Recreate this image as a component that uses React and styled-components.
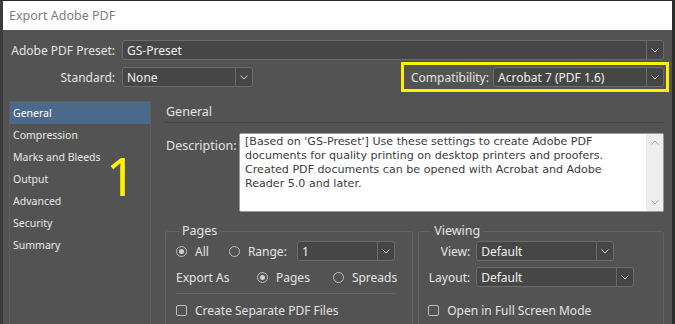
import React from 'react'
import styled, { createGlobalStyle } from 'styled-components'

const GlobalStyle = createGlobalStyle`
  html, body {
    margin: 0;
    padding: 0;
    background: #535353;
  }
  body {
    font-family: "Noto Sans", "Open Sans", sans-serif;
  }
`

const Window = styled.div`
  width: 675px;
  height: 324px;
  box-sizing: border-box;
  overflow: hidden;
  display: flex;
  flex-direction: column;
  border-top: 1px solid #2a2a2a;
  border-left: 3px solid #3b3b3b;
  border-right: 3px solid #2b2b2b;
  background: #535353;
  color: #e4e4e4;
  font-size: 12px;
`

const TitleBar = styled.div`
  flex: none;
  height: 29px;
  display: flex;
  align-items: center;
  padding-left: 6px;
  background: #fff;
  color: #7d7d7d;
  font-size: 12.5px;
`

const Body = styled.div`
  flex: 1;
  min-height: 0;
  display: flex;
  flex-direction: column;
  padding: 10px 8px 0 6px;
`

const Row = styled.div`
  flex: none;
  display: flex;
  align-items: center;
  height: ${p => p.$h || 20}px;
  margin-top: ${p => p.$mt || 0}px;
`

const Label = styled.div`
  flex: none;
  width: ${p => p.$w}px;
  margin-right: ${p => p.$gap ?? 7}px;
  text-align: ${p => (p.$left ? 'left' : 'right')};
  white-space: nowrap;
`

const SelectBox = styled.div`
  box-sizing: border-box;
  display: flex;
  height: 20px;
  width: ${p => (p.$w ? `${p.$w}px` : 'auto')};
  flex: ${p => (p.$w ? 'none' : '1')};
  border: 1px solid #6c6c6c;
  border-radius: 3px;
  background: #464646;
  color: #f0f0f0;
`

const SelectValue = styled.div`
  flex: 1;
  display: flex;
  align-items: center;
  padding-left: 4px;
  white-space: nowrap;
`

const SelectArrow = styled.div`
  flex: none;
  width: 16px;
  display: flex;
  align-items: center;
  justify-content: center;
  border-left: 1px solid #6c6c6c;
`

const Spacer = styled.div`
  flex: 1;
`

const Highlight = styled.div`
  box-sizing: border-box;
  display: flex;
  align-items: center;
  height: 30px;
  margin-right: -5px;
  padding: 0 2px 0 7px;
  border: 3px solid #fff200;
`

const Main = styled.div`
  flex: 1;
  min-height: 0;
  display: flex;
  margin-top: 9px;
`

const Sidebar = styled.div`
  position: relative;
  flex: none;
  width: 142px;
  box-sizing: border-box;
  border: 1px solid #5f5f5f;
  border-bottom: none;
`

const NavItem = styled.div`
  height: 22px;
  display: flex;
  align-items: center;
  padding-left: 3px;
  font-size: 10.5px;
  color: ${p => (p.$active ? '#ffffff' : '#e8e8e8')};
  background: ${p => (p.$active ? '#4b6a8b' : 'transparent')};
`

const Callout = styled.div`
  position: absolute;
  left: 96px;
  top: 47px;
  font-size: 53px;
  line-height: 1;
  color: #fff200;
`

const Panel = styled.div`
  flex: 1;
  min-width: 0;
  display: flex;
  flex-direction: column;
  padding-left: 14px;
`

const Heading = styled.div`
  flex: none;
  height: 21px;
  display: flex;
  align-items: center;
  padding-left: 1px;
  border-bottom: 1px solid #474747;
  font-size: 12.5px;
`

const DescRow = styled.div`
  flex: none;
  display: flex;
  margin-top: 10px;
`

const DescLabel = styled.div`
  flex: none;
  width: 74px;
  padding: 4px 0 0 1px;
  box-sizing: border-box;
  font-size: 12.5px;
`

const TextBox = styled.div`
  flex: 1;
  display: flex;
  height: 79px;
  box-sizing: border-box;
  border: 1px solid #9a9a9a;
  border-radius: 2px;
  background: #fff;
  overflow: hidden;
`

const TextBody = styled.div`
  flex: 1;
  padding: 1px 6px 1px 5px;
  font-family: "DejaVu Sans", "Noto Sans", sans-serif;
  font-size: 11.1px;
  line-height: 14px;
  color: #3c3c3c;
`

const ScrollTrack = styled.div`
  flex: none;
  width: 17px;
  display: flex;
  flex-direction: column;
  justify-content: space-between;
  align-items: center;
  padding: 6px 0;
  background: #eeeeee;
`

const Groups = styled.div`
  flex: none;
  display: flex;
  gap: 5px;
  margin-top: 11px;
`

const Group = styled.fieldset`
  margin: 0;
  box-sizing: border-box;
  width: ${p => (p.$w ? `${p.$w}px` : 'auto')};
  flex: ${p => (p.$w ? 'none' : '1')};
  height: 140px;
  padding: 0 15px 0 ${p => p.$pl || 10}px;
  border: 1px solid #626262;
  border-radius: 3px;
`

const Legend = styled.legend`
  margin-left: 3px;
  padding: 0 3px;
  font-size: 12.5px;
  line-height: 16px;
`

const Radio = styled.span`
  flex: none;
  box-sizing: border-box;
  width: 11px;
  height: 11px;
  border-radius: 50%;
  border: 1px solid #bdbdbd;
  margin-left: ${p => p.$ml || 0}px;
  margin-right: 8px;
  display: flex;
  align-items: center;
  justify-content: center;
  &::after {
    content: '';
    width: 5px;
    height: 5px;
    border-radius: 50%;
    background: ${p => (p.$on ? '#d0d0d0' : 'transparent')};
  }
`

const Check = styled.span`
  flex: none;
  box-sizing: border-box;
  width: 11px;
  height: 11px;
  border: 1px solid #bdbdbd;
  border-radius: 2px;
  margin-right: 8px;
`

const Divider = styled.div`
  height: 1px;
  margin-top: 6px;
  background: #616161;
`

const Chevron = ({ color = '#cfcfcf', up }) => (
  <svg width='8' height='5' viewBox='0 0 8 5'>
    <polyline
      points={up ? '0.5,4.5 4,1 7.5,4.5' : '0.5,0.5 4,4 7.5,0.5'}
      fill='none'
      stroke={color}
      strokeWidth='1'
    />
  </svg>
)

const Select = ({ value, w }) => (
  <SelectBox $w={w}>
    <SelectValue>{value}</SelectValue>
    <SelectArrow>
      <Chevron />
    </SelectArrow>
  </SelectBox>
)

const navItems = ['General', 'Compression', 'Marks and Bleeds', 'Output', 'Advanced', 'Security', 'Summary']

const App = () => (
  <>
    <GlobalStyle />
    <Window>
      <TitleBar>Export Adobe PDF</TitleBar>
      <Body>
        <Row>
          <Label $w={106}>Adobe PDF Preset:</Label>
          <Select value='GS-Preset' />
        </Row>
        <Row $h={30} $mt={2}>
          <Label $w={106}>Standard:</Label>
          <Select value='None' w={131} />
          <Spacer />
          <Highlight>
            <Label $w={74} $gap={8}>Compatibility:</Label>
            <Select value='Acrobat 7 (PDF 1.6)' w={171} />
          </Highlight>
        </Row>
        <Main>
          <Sidebar>
            {navItems.map((item, i) => (
              <NavItem key={item} $active={i === 0}>{item}</NavItem>
            ))}
            <Callout>1</Callout>
          </Sidebar>
          <Panel>
            <Heading>General</Heading>
            <DescRow>
              <DescLabel>Description:</DescLabel>
              <TextBox>
                <TextBody>
                  [Based on 'GS-Preset'] Use these settings to create Adobe PDF documents for quality
                  printing on desktop printers and proofers. Created PDF documents can be opened with
                  Acrobat and Adobe Reader 5.0 and later.
                </TextBody>
                <ScrollTrack>
                  <Chevron up color='#a8a8a8' />
                  <Chevron color='#a8a8a8' />
                </ScrollTrack>
              </TextBox>
            </DescRow>
            <Groups>
              <Group $w={246}>
                <Legend>Pages</Legend>
                <Row $mt={2}>
                  <Radio $on />
                  <span>All</span>
                  <Radio $ml={20} />
                  <Label $w={40} $gap={9} $left>Range:</Label>
                  <Select value='1' w={98} />
                </Row>
                <Row $mt={6}>
                  <Label $w={81} $gap={0} $left>Export As</Label>
                  <Radio $on />
                  <span>Pages</span>
                  <Radio $ml={23} />
                  <span>Spreads</span>
                </Row>
                <Divider />
                <Row $h={18} $mt={7}>
                  <Check />
                  <span>Create Separate PDF Files</span>
                </Row>
              </Group>
              <Group $pl={9}>
                <Legend>Viewing</Legend>
                <Row $mt={2}>
                  <Label $w={42} $gap={6}>View:</Label>
                  <Select value='Default' w={138} />
                </Row>
                <Row $mt={6}>
                  <Label $w={42} $gap={6}>Layout:</Label>
                  <Select value='Default' w={158} />
                </Row>
                <Row $h={18} $mt={14}>
                  <Check />
                  <span>Open in Full Screen Mode</span>
                </Row>
              </Group>
            </Groups>
          </Panel>
        </Main>
      </Body>
    </Window>
  </>
)

export default App
